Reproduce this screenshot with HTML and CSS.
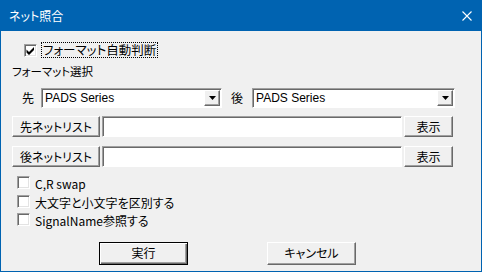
FILE: index.html
```html
<!DOCTYPE html>
<html>
<head>
	<title>ネット照合</title>
	<link rel="stylesheet" href="styles.css">
</head>
<body>
	<div class="window">
		<div class="titlebar">
			<span class="title">ネット照合</span>
			<svg class="close" width="10" height="10" viewBox="0 0 10 10">
				<path d="M0.5 0.5 L9.5 9.5 M9.5 0.5 L0.5 9.5" stroke="#fff" stroke-width="1.1" fill="none"/>
			</svg>
		</div>
		<div class="body">
			<div class="auto-row">
				<span class="check">
					<svg width="11" height="11" viewBox="0 0 11 11">
						<path d="M1.5 4.5 L4 7 L9 2 L9 5 L4 10 L1.5 7.5 Z" fill="#000"/>
					</svg>
				</span>
				<span class="focus">フォーマット自動判断</span>
			</div>
			<div class="section-label">フォーマット選択</div>
			<div class="format-row">
				<span class="lbl first">先</span>
				<div class="combo combo-a">
					<span class="combo-text">PADS Series</span>
					<span class="combo-btn"><svg width="7" height="4" viewBox="0 0 7 4"><path d="M0 0 H7 L3.5 4 Z" fill="#000"/></svg></span>
				</div>
				<span class="lbl second">後</span>
				<div class="combo combo-b">
					<span class="combo-text">PADS Series</span>
					<span class="combo-btn"><svg width="7" height="4" viewBox="0 0 7 4"><path d="M0 0 H7 L3.5 4 Z" fill="#000"/></svg></span>
				</div>
			</div>
			<div class="file-row">
				<button class="btn list-btn">先ネットリスト</button>
				<span class="field"></span>
				<button class="btn show-btn">表示</button>
			</div>
			<div class="file-row row2">
				<button class="btn list-btn">後ネットリスト</button>
				<span class="field"></span>
				<button class="btn show-btn">表示</button>
			</div>
			<div class="options">
				<div class="opt"><span class="check"></span><span>C,R swap</span></div>
				<div class="opt"><span class="check"></span><span>大文字と小文字を区別する</span></div>
				<div class="opt"><span class="check"></span><span>SignalName参照する</span></div>
			</div>
			<div class="actions">
				<button class="btn action default">実行</button>
				<button class="btn action">キャンセル</button>
			</div>
		</div>
	</div>
</body>
</html>
```

FILE: styles.css
```css
* {
	box-sizing: border-box;
}
body {
	margin: 0;
	background: #f0f0f0;
	font-family: "Noto Sans CJK JP", "Liberation Sans", sans-serif;
	font-size: 12px;
	font-feature-settings: "palt";
	color: #000;
}
.window {
	width: 482px;
	height: 272px;
	border: 1px solid #0063b1;
	border-top: none;
	background: #f0f0f0;
}
.titlebar {
	height: 31px;
	margin: 0 -1px;
	background: #0063b1;
	color: #fff;
	display: flex;
	align-items: center;
	justify-content: space-between;
	padding: 0 10px 0 9px;
}
.title {
	font-size: 12px;
	line-height: 14px;
}
.close {
	display: block;
}
.body {
	padding-left: 11px;
}
.check {
	width: 13px;
	height: 13px;
	background: #fff;
	border: 1px solid;
	border-color: #a0a0a0 #fff #fff #a0a0a0;
	box-shadow: inset 1px 1px 0 #696969, inset -1px -1px 0 #e3e3e3;
	display: flex;
	align-items: center;
	justify-content: center;
	flex: none;
}
.check svg {
	display: block;
}
.auto-row {
	display: flex;
	align-items: center;
	margin-top: 11px;
	padding-left: 12px;
	gap: 4px;
}
.focus {
	border: 1px dotted #000;
	padding: 0 1px;
	line-height: 14px;
	font-size: 12.5px;
}
.section-label {
	margin-top: 6px;
	line-height: 14px;
	font-size: 11.5px;
}
.format-row {
	display: flex;
	align-items: center;
	margin-top: 10px;
	height: 20px;
}
.lbl {
	line-height: 14px;
}
.lbl.first {
	margin-left: 10px;
	margin-right: 7px;
}
.lbl.second {
	margin-left: 9px;
	margin-right: 9px;
}
.combo {
	height: 20px;
	background: #fff;
	border: 1px solid;
	border-color: #a0a0a0 #fff #fff #a0a0a0;
	box-shadow: inset 1px 1px 0 #696969;
	display: flex;
	align-items: center;
	justify-content: space-between;
	padding: 1px 1px 1px 3px;
}
.combo-a {
	width: 181px;
}
.combo-b {
	width: 203px;
}
.combo-text {
	font-family: "Liberation Sans", "Noto Sans CJK JP", sans-serif;
	font-size: 12px;
	line-height: 14px;
}
.combo-btn {
	width: 16px;
	height: 16px;
	background: #f0f0f0;
	border: 1px solid;
	border-color: #fff #696969 #696969 #fff;
	box-shadow: inset -1px -1px 0 #a0a0a0;
	display: flex;
	align-items: center;
	justify-content: center;
}
.combo-btn svg {
	display: block;
}
.file-row {
	display: flex;
	align-items: center;
	margin-top: 8px;
	height: 21px;
}
.file-row.row2 {
	margin-top: 9px;
}
.btn {
	font: inherit;
	color: #000;
	background: #f0f0f0;
	border: 1px solid;
	border-color: #fff #696969 #696969 #fff;
	box-shadow: inset -1px -1px 0 #a0a0a0;
	padding: 0;
	line-height: 14px;
	height: 21px;
}
.list-btn {
	width: 88px;
}
.field {
	width: 300px;
	height: 21px;
	margin-left: 2px;
	background: #fff;
	border: 1px solid;
	border-color: #a0a0a0 #fff #fff #a0a0a0;
	box-shadow: inset 1px 1px 0 #696969;
}
.show-btn {
	width: 49px;
	margin-left: 2px;
}
.options {
	margin-top: 8px;
	padding-left: 5px;
}
.opt {
	display: flex;
	align-items: center;
	gap: 5px;
	height: 18.5px;
	line-height: 14px;
}
.opt .check {
	margin-top: -3px;
}
.actions {
	display: flex;
	gap: 79px;
	margin-top: 11px;
	padding-left: 87px;
}
.action {
	width: 89px;
	height: 23px;
}
.action.default {
	border: 1px solid #000;
	box-shadow: inset 1px 1px 0 #fff, inset -1px -1px 0 #696969, inset -2px -2px 0 #a0a0a0;
}
```
